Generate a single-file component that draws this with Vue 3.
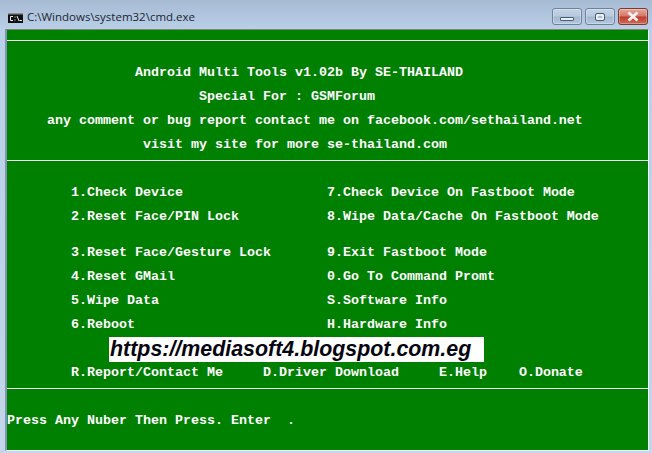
<script setup>
const blank = '';
const rows = [
  { t: blank, sep: true },
  { t: blank }, { t: blank },
  { t: '                Android Multi Tools v1.02b By SE-THAILAND' },
  { t: blank },
  { t: '                        Special For : GSMForum' },
  { t: blank },
  { t: '     any comment or bug report contact me on facebook.com/sethailand.net' },
  { t: blank },
  { t: '                 visit my site for more se-thailand.com' },
  { t: blank, sep: true },
  { t: blank }, { t: blank },
  { t: '        1.Check Device                  7.Check Device On Fastboot Mode' },
  { t: blank },
  { t: '        2.Reset Face/PIN Lock           8.Wipe Data/Cache On Fastboot Mode' },
  { t: blank }, { t: blank },
  { t: '        3.Reset Face/Gesture Lock       9.Exit Fastboot Mode' },
  { t: blank },
  { t: '        4.Reset GMail                   0.Go To Command Promt' },
  { t: blank },
  { t: '        5.Wipe Data                     S.Software Info' },
  { t: blank },
  { t: '        6.Reboot                        H.Hardware Info' },
  { t: blank }, { t: blank }, { t: blank },
  { t: '        R.Report/Contact Me     D.Driver Download     E.Help    O.Donate' },
  { t: blank, sep: true },
  { t: blank }, { t: blank },
  { t: 'Press Any Nuber Then Press. Enter  .' }
];
</script>

<template>
  <div class="window">
    <header class="titlebar">
      <svg class="appicon" width="15" height="10" viewBox="0 0 15 10">
        <rect x="0" y="0" width="15" height="10" fill="#111" />
        <rect x="0" y="0" width="15" height="1.5" fill="#8c8c8c" />
        <path d="M5 3.5H2.5V7.5H5" fill="none" stroke="#f2f2f2" stroke-width="1" />
        <rect x="6.5" y="3.5" width="1" height="1" fill="#f2f2f2" />
        <rect x="6.5" y="6.5" width="1" height="1" fill="#f2f2f2" />
        <path d="M9 3l2 5" fill="none" stroke="#f2f2f2" stroke-width="1" />
        <rect x="11.5" y="7" width="2.5" height="1" fill="#f2f2f2" />
      </svg>
      <span class="title">C:\Windows\system32\cmd.exe</span>
      <div class="controls">
        <button class="ctl">
          <span class="min-glyph"></span>
        </button>
        <button class="ctl">
          <span class="max-glyph"></span>
        </button>
        <button class="ctl close">
          <svg width="14" height="11" viewBox="0 0 14 11">
            <path d="M2.5 1.5 L11.5 9.5 M11.5 1.5 L2.5 9.5" stroke="#f4f1f0" stroke-width="3" fill="none" />
          </svg>
        </button>
      </div>
    </header>
    <main class="console">
      <div v-for="(r, i) in rows" :key="i" class="row" :class="{ sep: r.sep }">{{ r.t }}</div>
      <div class="stamp">https://mediasoft4.blogspot.com.eg</div>
    </main>
  </div>
</template>

<style scoped>
.window {
  width: 652px;
  height: 453px;
  box-sizing: border-box;
  padding: 0 3px 2px 5px;
  background: linear-gradient(180deg, #a7bbd3 0, #b9d0e8 30px, #c3d6ea 100%);
  display: flex;
  flex-direction: column;
  overflow: hidden;
}
.titlebar {
  height: 29px;
  flex: none;
  display: flex;
  align-items: center;
  box-sizing: border-box;
  padding-top: 5px;
}
.appicon {
  margin-left: 3px;
  margin-right: 4px;
  margin-top: 1px;
}
.title {
  font-family: "Open Sans", "Noto Sans", sans-serif;
  font-size: 11.5px;
  color: #1c2530;
  margin-top: -2px;
}
.controls {
  margin-left: auto;
  display: flex;
  gap: 3px;
  align-self: flex-start;
  margin-top: 3px;
  margin-right: 1px;
}
.ctl {
  width: 30px;
  height: 17px;
  padding: 0;
  border: 1px solid #6f8298;
  border-radius: 3px;
  background: linear-gradient(180deg, #c4d4e6 0, #b6c9de 48%, #a3b8d0 52%, #b4c8dd 100%);
  box-shadow: inset 0 0 0 1px rgba(255, 255, 255, 0.3);
  display: flex;
  align-items: center;
  justify-content: center;
}
.close {
  border-color: #7a3a30;
  background: linear-gradient(180deg, #e6a79c 0, #d4776a 48%, #bd3a2a 52%, #cf6b58 100%);
}
.min-glyph {
  width: 12px;
  height: 2px;
  margin-top: 4px;
  background: #e8eef5;
  border: 1px solid #4a5c72;
  border-radius: 1px;
}
.max-glyph {
  width: 4px;
  height: 2px;
  background: transparent;
  border: 2px solid #e8eef5;
  outline: 1px solid #4a5c72;
  border-radius: 1px;
}
.console {
  flex: 1;
  position: relative;
  background: #008000;
  border-top: 1px solid #7a8a70;
  border-left: 2px solid #8196ae;
  border-right: 1px solid #eef4fa;
  border-bottom: 1px solid #eef4fa;
  box-sizing: border-box;
  color: #fff;
  font-family: "Liberation Mono", monospace;
  font-size: 13.33px;
  font-weight: 700;
}
.row {
  height: 12px;
  line-height: 14px;
  white-space: pre;
}
.sep {
  background: linear-gradient(#f0f5f0, #f0f5f0) no-repeat 0 10px / 100% 1px;
}
.stamp {
  position: absolute;
  left: 102px;
  top: 307px;
  width: 375px;
  height: 25px;
  box-sizing: border-box;
  padding-left: 1px;
  background: #fff;
  color: #05050f;
  font-family: "Liberation Sans", Arial, sans-serif;
  font-size: 21.4px;
  font-weight: 700;
  font-style: italic;
  line-height: 25px;
}
</style>
